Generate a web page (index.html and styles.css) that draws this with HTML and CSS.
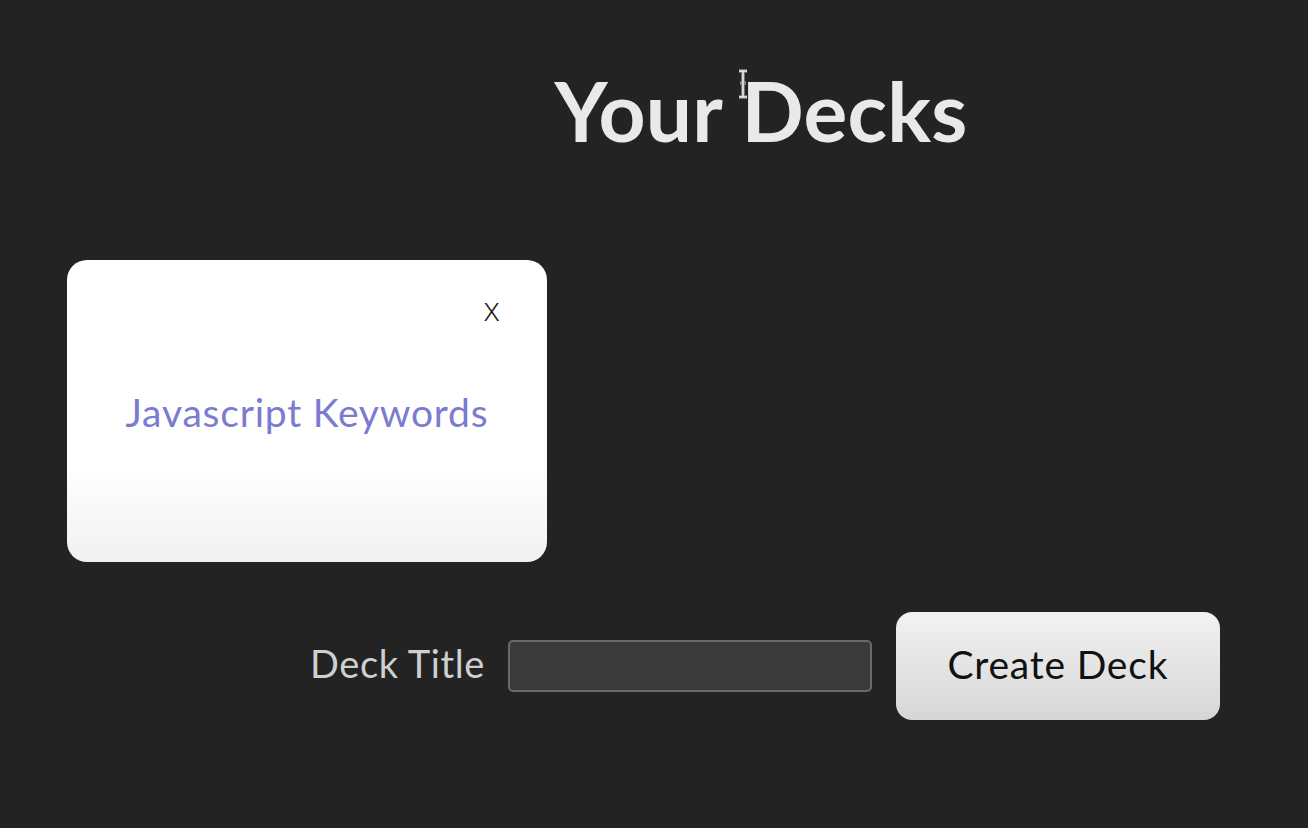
FILE: index.html
```html
<!DOCTYPE html>
<html>
<head>
<meta charset="utf-8">
<link rel="stylesheet" href="styles.css">
</head>
<body>
<div class="app">
  <header class="header">
    <h1 class="title">Your Decks</h1>
    <svg class="cursor" width="12" height="30" viewBox="0 0 12 30"><path d="M2 2h8M6 2v26M2 28h8M3 14h6" stroke="#888" stroke-width="3.5" fill="none"/><path d="M2 2h8M6 2v26M2 28h8" stroke="#eee" stroke-width="1.5" fill="none"/></svg>
  </header>
  <section class="decks">
    <div class="deck">
      <button class="deck-close">x</button>
      <span class="deck-name">Javascript Keywords</span>
    </div>
  </section>
  <form class="new-deck">
    <label class="label" for="title">Deck Title</label>
    <input class="input" id="title" type="text">
    <button class="create" type="button">Create Deck</button>
  </form>
</div>
</body>
</html>
```
FILE: styles.css
```css
* { box-sizing: border-box; }
html, body { margin: 0; height: 100%; }
body {
  background: #232323;
  font-family: "Lato", "Open Sans", sans-serif;
  overflow: hidden;
}
.app { width: 1308px; height: 828px; }
.header {
  position: relative;
  padding-left: 214px;
  padding-top: 60px;
  text-align: center;
}
.title {
  margin: 0;
  font-size: 82px;
  font-weight: 700;
  color: #e9e9e9;
  line-height: 100px;
  letter-spacing: 0.2px;
}
.cursor {
  position: absolute;
  left: 737px;
  top: 69px;
}
.decks {
  display: flex;
  padding-left: 67px;
  margin-top: 100px;
}
.deck {
  position: relative;
  width: 480px;
  height: 302px;
  border-radius: 20px;
  background: linear-gradient(to bottom, #ffffff 0%, #ffffff 68%, #f1f1f1 100%);
  display: flex;
  align-items: center;
  justify-content: center;
}
.deck-close {
  position: absolute;
  top: 26px;
  right: 47px;
  border: none;
  background: none;
  padding: 0;
  font-family: "Open Sans", sans-serif;
  font-size: 33px;
  font-weight: 300;
  color: #222;
}
.deck-name {
  font-size: 39px;
  color: #7b7bd0;
  letter-spacing: 0.8px;
  padding-top: 2px;
}
.new-deck {
  display: flex;
  align-items: center;
  justify-content: center;
  padding-left: 222px;
  margin-top: 50px;
}
.label {
  font-size: 38px;
  color: #cfcfcf;
  margin-right: 23px;
  letter-spacing: 0.6px;
  padding-bottom: 6px;
}
.input {
  width: 364px;
  height: 52px;
  background: #3b3b3b;
  border: 2px solid #6a6a6a;
  border-radius: 5px;
  margin-right: 24px;
}
.create {
  width: 324px;
  height: 108px;
  border: none;
  border-radius: 16px;
  background: linear-gradient(to bottom, #f2f2f2, #d6d6d6);
  font-family: "Lato", sans-serif;
  font-size: 39px;
  letter-spacing: 0.8px;
  color: #111;
  padding-bottom: 6px;
}
```
